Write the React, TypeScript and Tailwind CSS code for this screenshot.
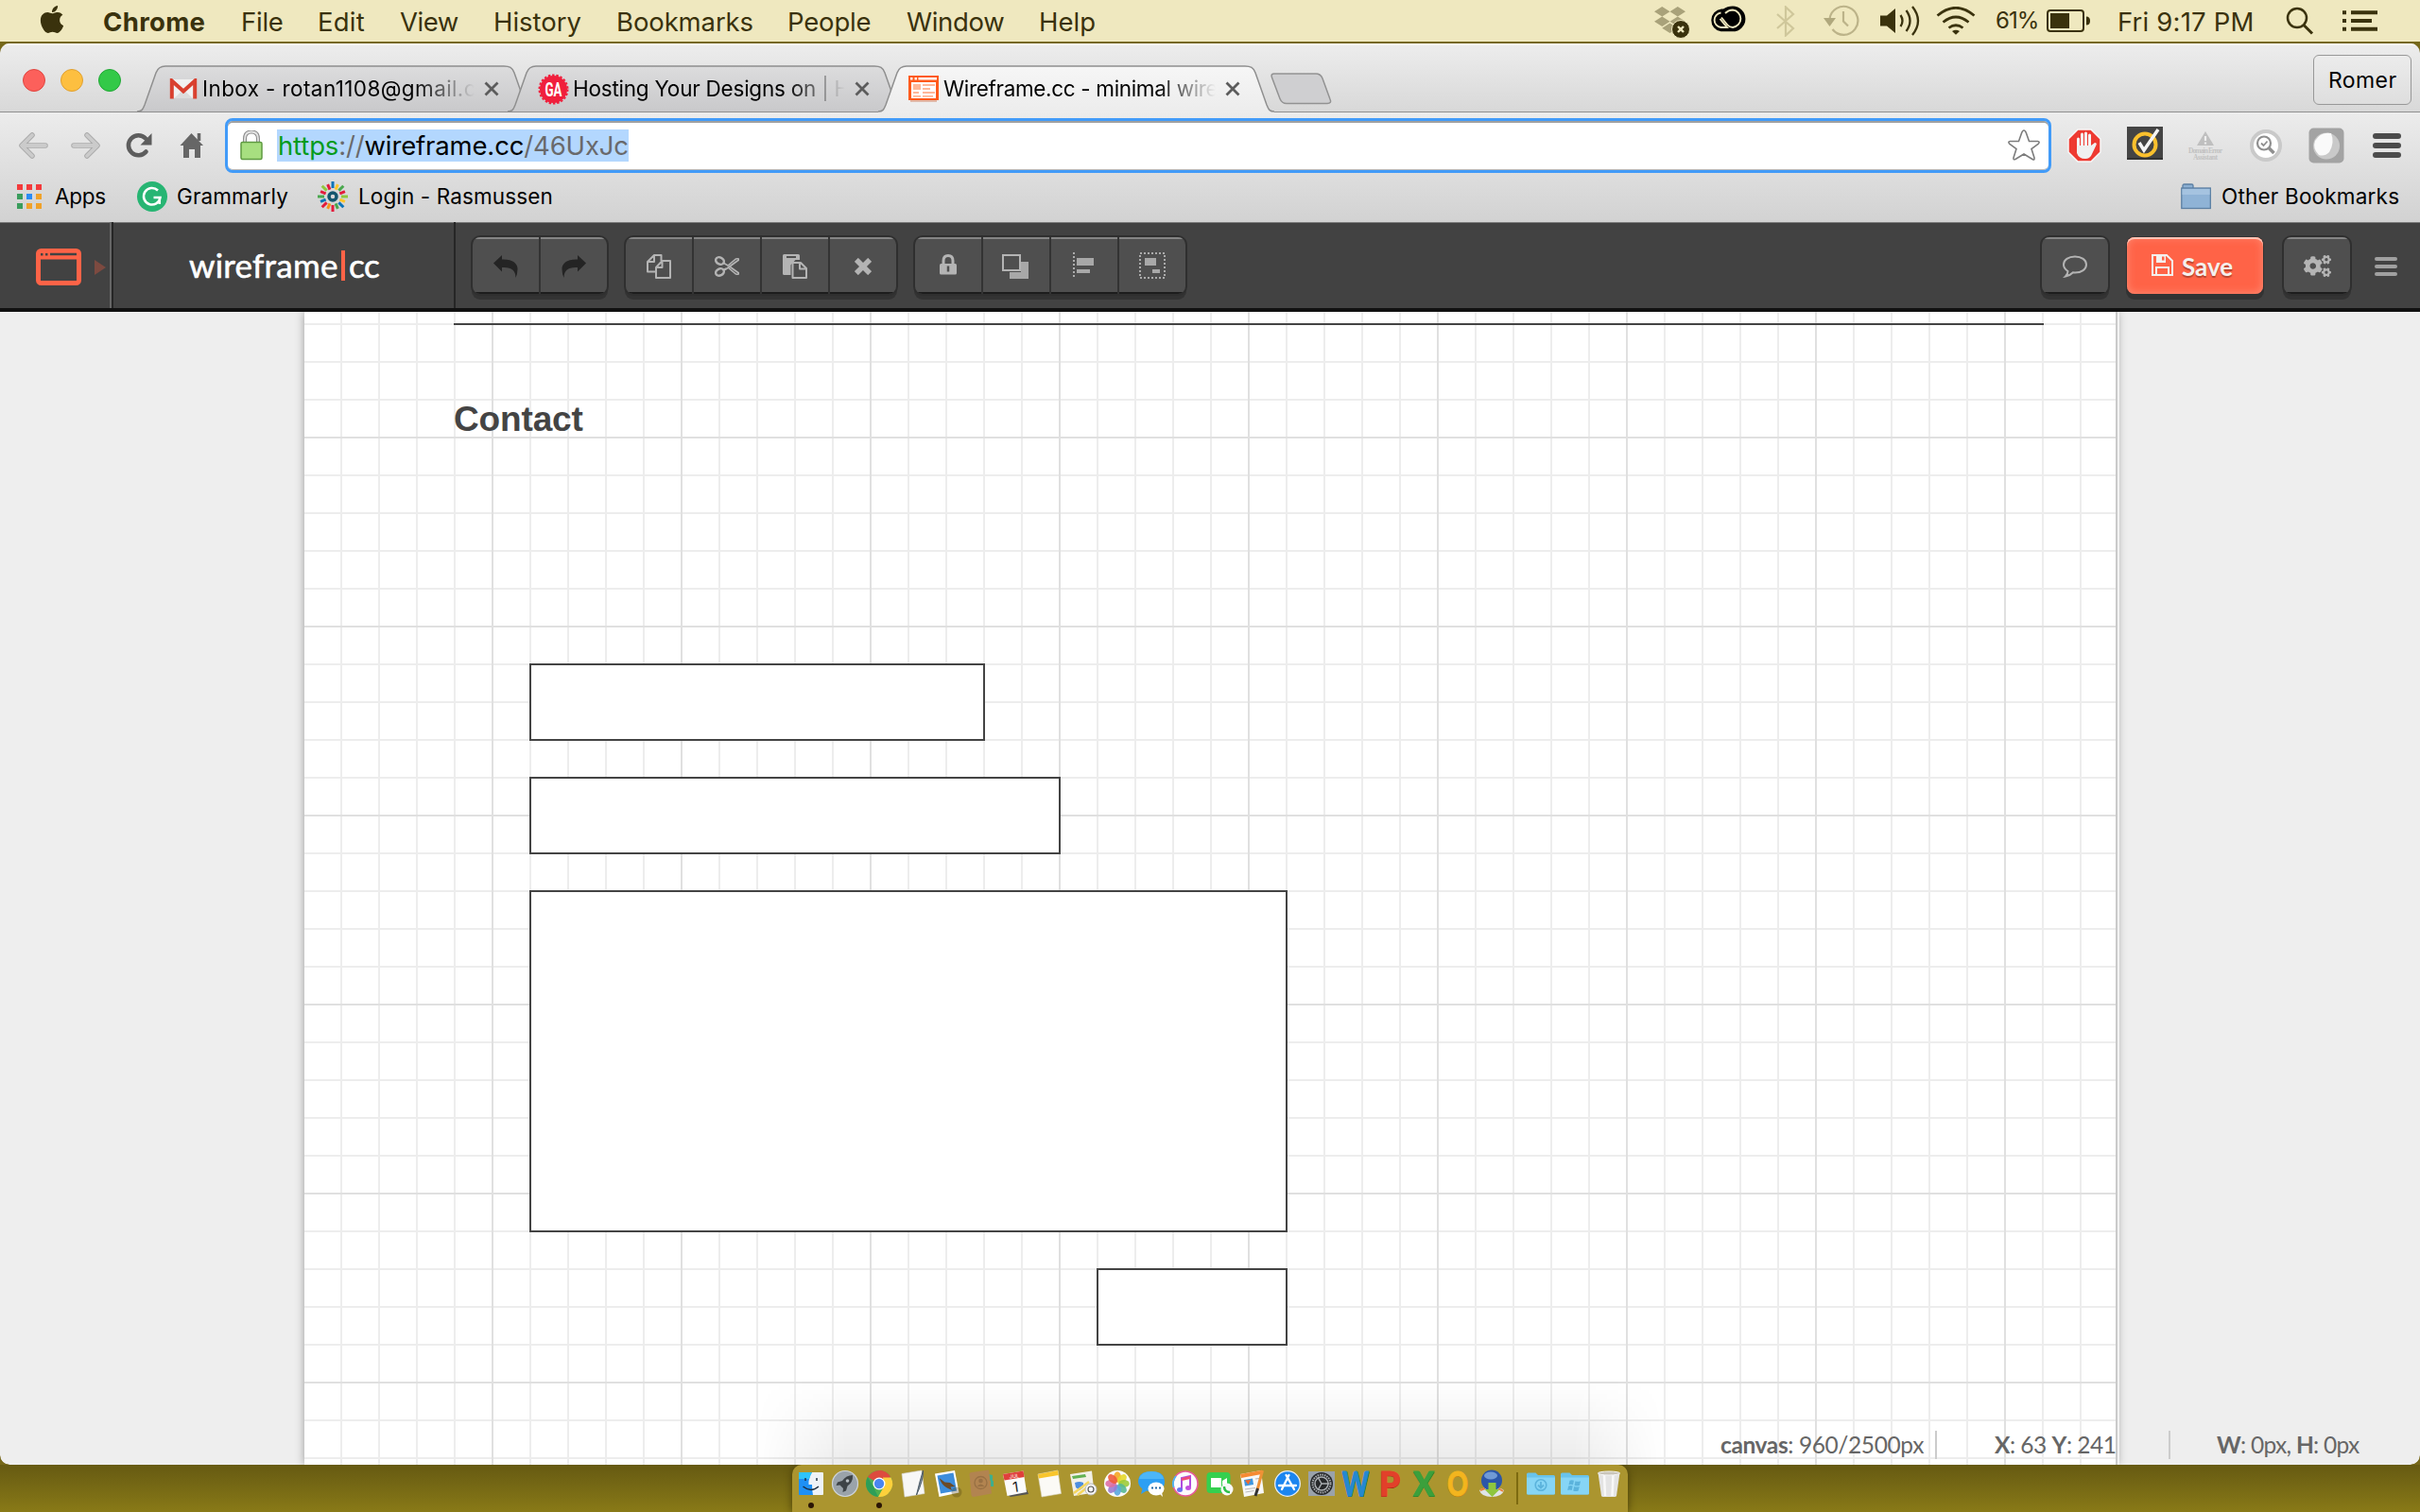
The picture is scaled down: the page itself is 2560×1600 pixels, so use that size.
import { useLayoutEffect, useRef, useState } from "react";
import type { ReactNode } from "react";
import { FaApple, FaDropbox, FaCogs } from "react-icons/fa";

const UI = "font-[Inter,'Liberation_Sans',sans-serif]";
const LATO = "font-[Lato,'Open_Sans',sans-serif]";

/** Sets a run of text to an exact width by spreading the difference over its letters. */
function Fit({ w, className = "", children }: { w: number; className?: string; children: ReactNode }) {
  const ref = useRef<HTMLSpanElement>(null);
  const [ls, setLs] = useState(0);
  useLayoutEffect(() => {
    const el = ref.current;
    if (!el) return;
    const n = (el.textContent || "").length || 1;
    setLs((w - el.offsetWidth) / n);
  }, [w]);
  return (
    <span className={"block shrink-0 whitespace-pre " + className} style={{ width: w }}>
      <span ref={ref} className="inline-block" style={{ letterSpacing: ls }}>
        {children}
      </span>
    </span>
  );
}

function Ico({ w, h, className = "", children }: { w: number; h: number; className?: string; children: ReactNode }) {
  return (
    <svg width={w} height={h} viewBox={`0 0 ${w} ${h}`} fill="none" className={"shrink-0 " + className}>
      {children}
    </svg>
  );
}

/* ---------- macOS menu bar ---------- */

function MenuBar() {
  return (
    <div className={"flex h-[46px] w-full shrink-0 items-center border-b-2 border-[#76681a] bg-[#efe8bf] text-[27.5px] leading-[44px] text-[#3a320d] " + UI}>
      <FaApple className="-mt-1 ml-[39px] h-[33px] w-[32px] shrink-0" />
      <div className="flex pt-px">
        <Fit w={108} className="ml-[38px] font-bold">Chrome</Fit>
        <Fit w={45} className="ml-[38px]">File</Fit>
        <Fit w={50} className="ml-[36px]">Edit</Fit>
        <Fit w={62} className="ml-[37px]">View</Fit>
        <Fit w={93} className="ml-[37px]">History</Fit>
        <Fit w={145} className="ml-[37px]">Bookmarks</Fit>
        <Fit w={88} className="ml-[36px]">People</Fit>
        <Fit w={103} className="ml-[38px]">Window</Fit>
        <Fit w={60} className="ml-[37px]">Help</Fit>
      </div>
      <div className="ml-auto flex items-center">
        <div className="relative h-[34px] w-[38px]">
          <FaDropbox className="h-[32px] w-[35px] text-[#a9a27a]" />
          <Ico w={20} h={20} className="absolute -right-px bottom-[-2px]">
            <circle cx="10" cy="10" r="9.5" fill="#3a320d" stroke="#efe8bf" strokeWidth="1" />
            <path d="M7 7l6 6M13 7l-6 6" stroke="#efe8bf" strokeWidth="2.4" />
          </Ico>
        </div>
        <Ico w={39} h={28} className="ml-[21px] -mt-1">
          <path d="M13 3.5h2C18 1.500 21 .5 25 .5a13.400 13.400 0 0 1 0 26.800H12.500a12 12 0 0 1 .5-23.800z" fill="#000" />
          <path d="M12.500 7.500a7.800 7.800 0 0 0 0 15.500H19L11.500 14M17 8q3.500-3.500 8-3.500a9.300 9.300 0 0 1 0 18.500q-3.500 0-5.500-2.500L13 12.500" stroke="#efe8bf" strokeWidth="1.900" />
        </Ico>
        <Ico w={20} h={33} className="ml-[32px]">
          <path d="M1 9l17 15-8 7.500V1.500L18 9 1 24" stroke="#cfc79b" strokeWidth="2.200" />
        </Ico>
        <Ico w={38} h={34} className="ml-[30px]">
          <path d="M6.500 15A15 15 0 1 1 9.500 26M21 7v10.500l5 5" stroke="#bcb389" strokeWidth="2.200" />
          <path d="M0 14h13l-6.500 9z" fill="#b0a87d" />
        </Ico>
        <Ico w={42} h={32} className="ml-[22px]">
          <path d="M0 10.500h7L16 3v26l-9-7.500H0z" fill="#3a320d" />
          <path d="M21.500 10q4 6 0 12M27.500 5q8 11 0 22M34 1q12 15 0 30" stroke="#3a320d" strokeWidth="2.300" />
        </Ico>
        <Ico w={42} h={30} className="ml-[17px]">
          <path d="M1.500 9.500Q21-7 40.500 9.500M7.500 16.500q13.500-11 27 0M13.500 22.500q7.500-5.500 15 0" stroke="#3a320d" strokeWidth="2.700" />
          <path d="M17 26q4-2.500 8 0l-4 3.800z" fill="#3a320d" />
        </Ico>
        <Fit w={45} className="ml-[21px] text-[24px]">61%</Fit>
        <Ico w={47} h={24} className="ml-[9px]">
          <rect x="1" y="1" width="38" height="22" rx="3" stroke="#3a320d" strokeWidth="2" />
          <rect x="4" y="4" width="20" height="16" fill="#3a320d" />
          <path d="M42 7.500q4 0 4 4.500t-4 4.500z" fill="#3a320d" />
        </Ico>
        <Fit w={144} className="ml-[28px] pt-px">Fri 9:17 PM</Fit>
        <Ico w={30} h={30} className="ml-[34px]">
          <circle cx="12" cy="12" r="10" stroke="#3a320d" strokeWidth="2.500" />
          <path d="M19 19.500l9 9" stroke="#3a320d" strokeWidth="3" />
        </Ico>
        <Ico w={37} h={22} className="ml-[30px] mr-[45px]">
          <path d="M0 2.200h4M0 11h4M0 19.800h4M9 2.200h28M9 11h22M9 19.800h28" stroke="#3a320d" strokeWidth="4" />
        </Ico>
      </div>
    </div>
  );
}

/* ---------- Chrome tab strip ---------- */

const TAB_PATH = "M0 49C5 49 6 47 8 42L20 8C22 2.500 25 1 30 1H388C394 1 397 2.500 399 8L411 42C413 47 414 49 419 49";

function Tab({ active, icon, title, textW, className = "" }: { active?: boolean; icon: ReactNode; title: string; textW: number; className?: string }) {
  return (
    <div className={"relative h-[50px] w-[420px] shrink-0 " + (active ? "z-10 " : "") + className}>
      <svg width="420" height="51" viewBox="0 0 420 51" className="absolute left-0 top-0" fill="none">
        <defs>
          <linearGradient id="tabOn" x1="0" y1="0" x2="0" y2="1">
            <stop offset="0" stopColor="#f6f6f6" />
            <stop offset="1" stopColor="#ececec" />
          </linearGradient>
          <linearGradient id="tabOff" x1="0" y1="0" x2="0" y2="1">
            <stop offset="0" stopColor="#dcdcdd" />
            <stop offset="1" stopColor="#c9c9cb" />
          </linearGradient>
        </defs>
        <path d={TAB_PATH + (active ? "V51H0z" : "z")} fill={active ? "url(#tabOn)" : "url(#tabOff)"} />
        <path d={TAB_PATH} stroke="#8f8f8f" strokeWidth="1.500" />
      </svg>
      <div className={"relative flex h-full items-center text-[22.5px] leading-[50px] text-black " + UI}>
        <div className="ml-[32px] flex w-[37px] shrink-0 items-center">{icon}</div>
        <div className="w-[288px] shrink-0 overflow-hidden [mask-image:linear-gradient(90deg,#000_78%,transparent_100%)]">
          <Fit w={textW}>{title}</Fit>
        </div>
        <Ico w={16} h={16} className="ml-[10px]">
          <path d="M1.500 1.500l13 13M14.500 1.500l-13 13" stroke="#5c5c5c" strokeWidth="2.800" />
        </Ico>
      </div>
    </div>
  );
}

function GmailIcon() {
  return (
    <Ico w={30} h={22} className="ml-[2px]">
      <path d="M1 1h28v20H1z" fill="#f1f1f1" />
      <path d="M5 21l10-9 10 9z" fill="#dcdcdc" />
      <path d="M2.800 21.500V2.500L15 13.500 27.200 2.500v19" stroke="#d9402f" strokeWidth="4" />
    </Ico>
  );
}

function GAIcon() {
  return (
    <Ico w={33} h={33}>
      <circle cx="16.500" cy="16.500" r="14.500" fill="#f01f3c" />
      <circle cx="16.500" cy="16.500" r="15" stroke="#f01f3c" strokeWidth="2" strokeDasharray="2.500 1.800" />
      <text x="16.500" y="24" textAnchor="middle" fontFamily="Roboto, sans-serif" fontWeight="700" fontSize="21" textLength="18" lengthAdjust="spacingAndGlyphs" fill="#fff">GA</text>
    </Ico>
  );
}

function WireIcon() {
  return (
    <Ico w={32} h={28}>
      <rect width="32" height="26" fill="#ff5a1c" />
      <path d="M2 2h2.500v2.500H2zM6.500 2H9v2.500H6.500zM10.500 2H30v2.500H10.500zM3 7h26v17H3z" fill="#fff" />
      <path d="M5 9h8v6H5zM15 9h13v2H15zM15 13h8v2h-8zM5 17h6v2H5zM15 17h13v2H15zM5 21h8v1.800H5zM15 21h11v1.800H15z" fill="#ffb798" />
      <path d="M2 27h28" stroke="#e2b9a8" strokeWidth="2" />
    </Ico>
  );
}

function TabStrip() {
  return (
    <div className="flex h-[73px] w-full shrink-0 items-end bg-linear-to-b from-[#ededed] to-[#d8d8d8] shadow-[inset_0_2px_0_#f8f8f8,inset_0_-1px_0_#8f8f8f]">
      <div className="mb-[22px] ml-[24px] flex shrink-0 gap-4">
        <div className="size-6 rounded-full border border-[#e0453f] bg-[#fc605b]" />
        <div className="size-6 rounded-full border border-[#e0a030] bg-[#fdbf40]" />
        <div className="size-6 rounded-full border border-[#1fa834] bg-[#33c948]" />
      </div>
      <Tab className="ml-[17px]" icon={<GmailIcon />} title="Inbox - rotan1108@gmail.c" textW={290} />
      <Tab className="-ml-[28px]" icon={<GAIcon />} title="Hosting Your Designs on | H" textW={293} />
      <Tab className="-ml-[28px]" active icon={<WireIcon />} title="Wireframe.cc - minimal wire" textW={290} />
      <Ico w={66} h={34} className="-ml-[5px] mb-[8px]">
        <path d="M4 1H48q5 0 7 5l8 22q2 4.500-3 4.500H17q-5 0-7-5L1.500 5Q0 1 4 1z" fill="#cfcfd1" stroke="#929292" strokeWidth="1.500" />
      </Ico>
      <div className={"mb-[8px] ml-auto mr-[9px] flex h-[53px] w-[104px] shrink-0 items-center justify-center rounded-md border-[1.500px] border-[#989898] bg-linear-to-b from-[#ececec] to-[#dedede] pt-[2px] text-[23px] text-black " + UI}>
        <Fit w={72}>Romer</Fit>
      </div>
    </div>
  );
}

/* ---------- Chrome toolbar and bookmarks ---------- */

function Extensions() {
  return (
    <>
      <Ico w={36} h={36} className="ml-[17px]">
        <path d="M11 1h14l10 10v14L25 35H11L1 25V11z" fill="#ee3a31" stroke="#f7f7f7" strokeWidth="1.500" />
        <path d="M11.500 11v12M15.500 6v14M19.500 5v14M23.500 7v14" stroke="#f5f5f5" strokeWidth="3" strokeLinecap="round" />
        <path d="M10 18h15l4-3q2.500 0 1.500 2.500l-5 10.500q-2 4-6.500 4-7 0-9-6z" fill="#f0f0f0" />
      </Ico>
      <Ico w={38} h={38} className="ml-[27px] -mt-[3px]">
        <path d="M0 1h38v34H0z" fill="#444" />
        <path d="M0 35h38" stroke="#333" strokeWidth="2" />
        <circle cx="19" cy="20" r="11.500" stroke="#fbc02d" strokeWidth="4" />
        <path d="M13 18l5 8L33 4" stroke="#f4f4f4" strokeWidth="3.500" />
      </Ico>
      <Ico w={38} h={32} className="ml-[26px]">
        <path d="M19 1l9 15H10z" fill="#bfbfbf" />
        <path d="M19 6v5M19 12.500v2" stroke="#eee" strokeWidth="2.200" />
        <text x="19" y="24" textAnchor="middle" fontFamily="Liberation Serif, serif" fontWeight="700" fontSize="7.500" textLength="36" fill="#c2c2c2">Domain Error</text>
        <text x="19" y="31" textAnchor="middle" fontFamily="Liberation Serif, serif" fontWeight="700" fontSize="7.500" textLength="26" fill="#c2c2c2">Assistant</text>
      </Ico>
      <Ico w={34} h={34} className="ml-[28px]">
        <circle cx="17" cy="17" r="15" fill="#fff" stroke="#c9c9c9" strokeWidth="4" />
        <circle cx="15" cy="14.500" r="7" stroke="#8f8f8f" strokeWidth="2.200" />
        <path d="M20 19.500l5.500 5.500" stroke="#8f8f8f" strokeWidth="3.500" />
        <path d="M12 14.500l2.500 2.500 4-4.500" stroke="#8f8f8f" strokeWidth="1.800" />
      </Ico>
      <Ico w={38} h={38} className="ml-[28px]">
        <rect x="0.500" y="0.500" width="37" height="37" rx="5" fill="#a3a3a3" />
        <circle cx="19" cy="19.500" r="14" fill="#c9c9c9" />
        <path d="M24 6q4 10-2 20-5 5-11 3Q4 22 7 14 13 4 24 6z" fill="#fafafa" />
      </Ico>
      <Ico w={30} h={26} className="ml-[30px]">
        <path d="M3 3h24M3 13h24M3 23h24" stroke="#4b4b4b" strokeWidth="6" strokeLinecap="round" />
      </Ico>
    </>
  );
}

function Toolbar() {
  return (
    <div className="flex h-[69px] w-full shrink-0 items-center">
      <Ico w={31} h={28} className="ml-[20px]">
        <path d="M14 3L3 14l11 11M4 14h24" stroke="#a9a9a9" strokeWidth="5.500" strokeLinecap="round" strokeLinejoin="round" />
        <path d="M14 3L3 14l11 11M4 14h24" stroke="#cbcbcb" strokeWidth="3.800" strokeLinecap="round" strokeLinejoin="round" />
      </Ico>
      <Ico w={31} h={28} className="ml-[24px]">
        <path d="M17 3l11 11-11 11M27 14H3" stroke="#a9a9a9" strokeWidth="5.500" strokeLinecap="round" strokeLinejoin="round" />
        <path d="M17 3l11 11-11 11M27 14H3" stroke="#cbcbcb" strokeWidth="3.800" strokeLinecap="round" strokeLinejoin="round" />
      </Ico>
      <Ico w={28} h={28} className="ml-[27px]">
        <path d="M21.500 20.500A10.500 10.500 0 1 1 21 6.500" stroke="#5d5d5d" strokeWidth="4.600" strokeLinecap="round" />
        <path d="M27.500 1v12.500H15.500z" fill="#5d5d5d" />
      </Ico>
      <Ico w={26} h={28} className="ml-[29px]">
        <path d="M12.500 1L25 14h-3v13h-6V18h-6v9H4V14H0.500z" fill="#666" />
        <path d="M20.500 1v8" stroke="#666" strokeWidth="3.500" />
      </Ico>
      <div className="ml-[22px] flex h-[58px] w-[1932px] shrink-0 items-center rounded-[8px] border-[3px] border-[#429bf8] bg-white shadow-[inset_0_2px_0_#a0a0a0,inset_0_-1px_0_#b8b8b8]">
        <Ico w={24} h={32} className="ml-[13px]">
          <path d="M5 15V9q0-7.500 7-7.500T19 9v6" stroke="#8d8d8d" strokeWidth="4" />
          <path d="M5 15V9q0-7.500 7-7.500T19 9v6" stroke="#e3e3e3" strokeWidth="1.800" />
          <rect x="1" y="12.500" width="22" height="18" rx="1.500" fill="#a7df80" stroke="#5e9a41" strokeWidth="1.500" />
        </Ico>
        <div className={"ml-[15px] h-[34px] w-[372px] shrink-0 bg-[#b3d7fe] pl-px text-[27.5px] leading-[35px] text-[#69696b] " + UI}>
          <Fit w={371}>
            <span className="text-[#079b1c]">https</span>://<span className="text-black">wireframe.cc</span>/46UxJc
          </Fit>
        </div>
        <Ico w={36} h={36} className="ml-auto mr-[8px]">
          <path d="M18 2Q19.500 2 20.500 5l3 8.500h9q3 .5.500 3L26 21.500l3 9.500q.5 3-2 1.500L18 27l-9 5.500q-2.500 1-2-1.500l3-9.500-7-5q-2.500-2.500.5-3h9l3-8.500Q16.500 2 18 2z" stroke="#7d7d7d" strokeWidth="1.600" />
        </Ico>
      </div>
      <Extensions />
    </div>
  );
}

const APP_DOTS = ["#f33b3c", "#f33b3c", "#f33b3c", "#3a9d5d", "#2a8cf4", "#f0a22a", "#3a9d5d", "#f0a22a", "#f0a22a"];
const RAYS = ["#0c74b8", "#ffc629", "#4aa84e", "#e31b3b", "#8fc73e", "#ffc629", "#0c74b8", "#4aa84e", "#e31b3b", "#f7941d", "#e31b3b", "#0c74b8", "#4aa84e", "#e31b3b", "#8fc73e", "#e31b3b"];

function BookmarksBar() {
  return (
    <div className={"flex h-[47px] w-full shrink-0 items-center pb-[7px] text-[22.500px] leading-[40px] text-black " + UI}>
      <div className="ml-[18px] grid shrink-0 grid-cols-3 gap-[4px]">
        {APP_DOTS.map((c, i) => (
          <div key={i} className="size-[6px]" style={{ backgroundColor: c }} />
        ))}
      </div>
      <Fit w={54} className="ml-[14px]">Apps</Fit>
      <Ico w={32} h={32} className="ml-[33px]">
        <circle cx="16" cy="16" r="16" fill="#27b573" />
        <path d="M22 9.500A8.800 8.800 0 1 0 24.500 17H17.500M23.800 17v7" stroke="#fff" strokeWidth="2.500" />
      </Ico>
      <Fit w={118} className="ml-[10px]">Grammarly</Fit>
      <Ico w={32} h={32} className="ml-[31px]">
        {RAYS.map((c, i) => (
          <path key={i} d={i % 2 ? "M16 2v6" : "M16 0v7"} stroke={c} strokeWidth="3" transform={`rotate(${i * 22.5} 16 16)`} />
        ))}
        <circle cx="16" cy="16" r="4" stroke="#14566e" strokeWidth="3.500" />
      </Ico>
      <Fit w={206} className="ml-[11px]">Login - Rasmussen</Fit>
      <Ico w={32} h={28} className="ml-auto">
        <path d="M2 5V2.500Q2 1 3.500 1h8Q13 1 13 2.500V5" fill="#8db0d3" stroke="#5b7fa3" strokeWidth="1.300" />
        <rect x="0.800" y="5" width="30.500" height="21.500" fill="#8fb3d6" stroke="#5b7fa3" strokeWidth="1.300" />
        <path d="M1.500 6h29v6h-29z" fill="#a5c3e0" />
      </Ico>
      <Fit w={188} className="ml-[11px] mr-[22px]">Other Bookmarks</Fit>
    </div>
  );
}

/* ---------- wireframe.cc application bar ---------- */

const BTN = "flex h-[60px] shrink-0 overflow-hidden rounded-[8px] bg-[#4f4f4f] shadow-[0_0_0_2px_#2f2f2f,0_5px_0_1px_#333]";
const BTN_IN = "flex h-full flex-1 items-center justify-center pt-[2px] shadow-[inset_0_2px_0_#858585,inset_0_-2px_0_#1d1d1d]";

function Group({ className = "", icons }: { className?: string; icons: ReactNode[] }) {
  return (
    <div className={BTN + " " + className}>
      {icons.map((ic, i) => (
        <div key={i} className={BTN_IN + (i > 0 ? " border-l-2 border-[#333]" : "")}>
          {ic}
        </div>
      ))}
    </div>
  );
}

const G = "#b4b4b4";

const undo = (
  <Ico w={26} h={24}>
    <path d="M0 8.500L9 0v4.500C20 4 26 9 25.500 15q0 5-2 9 0-12-14.500-11v4.500z" fill="#242424" />
  </Ico>
);
const redo = (
  <Ico w={26} h={24}>
    <path d="M26 8.500L17 0v4.500C6 4 0 9 .5 15q0 5 2 9 0-12 14.500-11v4.500z" fill="#242424" />
  </Ico>
);
const copy = (
  <Ico w={26} h={26}>
    <path d="M10 18.500H1V8L8 1h7.500v6M8 1v7H1M10 25V14l6.500-7H25v18zM16.500 7v7H10" stroke={G} strokeWidth="2" strokeLinejoin="round" />
  </Ico>
);
const cut = (
  <Ico w={26} h={22}>
    <ellipse cx="5.500" cy="5" rx="4.500" ry="3.500" transform="rotate(25 5.500 5)" stroke={G} strokeWidth="2.400" />
    <ellipse cx="5.500" cy="17" rx="4.500" ry="3.500" transform="rotate(-25 5.500 17)" stroke={G} strokeWidth="2.400" />
    <path d="M9 7l5 3L22.500 3q3-.8 3 1L11 14.500M9 15l3-2M14 12l8.500 7q3 .8 3-1L15 10.500" stroke={G} strokeWidth="1.600" />
  </Ico>
);
const paste = (
  <Ico w={26} h={26}>
    <path d="M1.500 0h15Q18 0 18 1.500V6h-4.500L8.500 11.500V22h-7Q0 22 0 20.500v-19Q0 0 1.500 0z" fill={G} />
    <path d="M4 3h10" stroke="#4f4f4f" strokeWidth="2" />
    <path d="M10.500 25V9h8.500l6 6v10zM18 9v6.500h7" fill="#4f4f4f" stroke={G} strokeWidth="2" strokeLinejoin="round" />
  </Ico>
);
const cross = (
  <Ico w={18} h={18}>
    <path d="M3.800 3.800l10.400 10.400M14.200 3.800L3.800 14.200" stroke={G} strokeWidth="5.600" strokeLinecap="square" />
  </Ico>
);
const lock = (
  <Ico w={18} h={22} className="-mt-1">
    <path d="M4 11V7q0-5.500 5-5.500T14 7v4" stroke={G} strokeWidth="3" />
    <rect x="0" y="10" width="18" height="11.500" rx="1.500" fill={G} />
    <path d="M9 12.500v6" stroke="#4f4f4f" strokeWidth="2.500" />
  </Ico>
);
const layers = (
  <Ico w={28} h={26} className="-ml-[2px]">
    <path d="M20 8h8v18H8v-7h12z" fill="#a8a8a8" />
    <rect x="1" y="1" width="18" height="16" fill="#4f4f4f" stroke={G} strokeWidth="2" />
  </Ico>
);
const align = (
  <Ico w={22} h={28} className="-ml-[2px] -mt-[2px]">
    <path d="M1 0v28" stroke="#ababab" strokeWidth="2" strokeDasharray="2 2" />
    <path d="M4 6h18v8H4zM4 18h14v4H4z" fill="#a8a8a8" />
  </Ico>
);
const group = (
  <Ico w={28} h={28} className="-mt-[2px]">
    <rect x="1" y="1" width="26" height="26" stroke="#ababab" strokeWidth="2" strokeDasharray="2 2" />
    <path d="M6 6h12v8H6zM14 18h8v4h-8z" fill="#a8a8a8" />
  </Ico>
);

function AppBar() {
  return (
    <div className="flex h-[95px] w-full shrink-0 items-center border-b-4 border-[#111] bg-[#424242] shadow-[inset_0_1px_0_#777]">
      <Ico w={48} h={39} className="ml-[38px] mt-[3px]">
        <rect x="2.500" y="2.500" width="43" height="34" rx="3" stroke="#ff6347" strokeWidth="5" />
        <path d="M2 2h44v9.500H2z" fill="#ff6347" />
        <path d="M15 6h28M5 6.200h2.500M10 6.200h2.500" stroke="#424242" strokeWidth="2.400" />
      </Ico>
      <Ico w={12} h={16} className="ml-[14px] mt-[4px]">
        <path d="M0 0l12 8-12 8z" fill="#7d4a40" />
      </Ico>
      <div className="ml-[4px] h-full w-[4px] shrink-0 border-l-2 border-r-2 border-l-[#666] border-r-[#262626]" />
      <div className={"flex h-full w-[362px] shrink-0 items-center border-r-2 border-[#262626] text-[35px] leading-[44px] text-white [-webkit-text-stroke:0.6px_white] " + LATO}>
        <Fit w={158} className="ml-[80px] -mt-[2px]">wireframe</Fit>
        <div className="ml-[3px] h-[32px] w-[4px] shrink-0 bg-[#ff6347]" />
        <Fit w={32} className="ml-[4px] -mt-[2px]">cc</Fit>
      </div>
      <Group className="ml-[18px] w-[142px]" icons={[undo, redo]} />
      <Group className="ml-[20px] w-[286px]" icons={[copy, cut, paste, cross]} />
      <Group className="ml-[20px] w-[286px]" icons={[lock, layers, align, group]} />
      <Group
        className="ml-auto w-[70px]"
        icons={[
          <Ico w={26} h={24}>
            <path d="M13 1.500C20 1.500 25 5 25 10s-5 8.500-12 8.500l-2-.2Q8 21.500 3 22.500 5.500 20 5.500 17 1 14 1 10C1 5 6 1.500 13 1.500z" stroke={G} strokeWidth="2" />
          </Ico>,
        ]}
      />
      <div className={"ml-[20px] flex h-[60px] w-[144px] shrink-0 items-center rounded-[8px] bg-[#ff6347] pl-[26px] text-[26px] font-bold text-[#f4f0ee] [text-shadow:0_2px_1px_#b8452f] shadow-[inset_0_2px_0_#ffc4b6,inset_0_0_10px_#ff8f78,0_0_0_1px_#333,0_5px_0_1px_#333] " + LATO}>
        <Ico w={23} h={23}>
          <path d="M1 1h15l6 6v15H1z" stroke="#f4f0ee" strokeWidth="2" />
          <path d="M5 1h10v8H5z" fill="#f4f0ee" />
          <path d="M11 2.500h2.500v4H11z" fill="#ff6347" />
          <path d="M5 22v-8h13v8" stroke="#f4f0ee" strokeWidth="2" />
        </Ico>
        <Fit w={54} className="ml-[9px] pt-[4px]">Save</Fit>
      </div>
      <Group className="ml-[22px] w-[70px]" icons={[<FaCogs className="size-[29px] text-[#b4b4b4]" />]} />
      <div className="ml-[26px] mr-[24px] mt-[2px] flex w-[24px] shrink-0 flex-col gap-[4px]">
        <div className="h-[4px] rounded-sm bg-[#a0a0a0]" />
        <div className="h-[4px] rounded-sm bg-[#a0a0a0]" />
        <div className="h-[4px] rounded-sm bg-[#a0a0a0]" />
      </div>
    </div>
  );
}

/* ---------- Drawing canvas ---------- */

function Canvas() {
  return (
    <div className="relative flex h-[1220px] w-full shrink-0 overflow-hidden rounded-b-[10px] bg-[#eeeeee]">
      <div className="relative ml-[322px] h-full w-[1918px] shrink-0 border-r-2 border-[#cacaca] bg-white bg-[linear-gradient(#e0e0e0_2px,transparent_2px),linear-gradient(90deg,#e0e0e0_2px,transparent_2px),linear-gradient(#ededed_2px,transparent_2px),linear-gradient(90deg,#ededed_2px,transparent_2px)] bg-[length:200px_200px,200px_200px,40px_40px,40px_40px] bg-[position:0_132px,198px_0,0_12px,38px_0] shadow-[2px_0_0_#f2f2f2,0_0_9px_#999]">
        <div className="absolute left-[158px] top-[12px] h-[2px] w-[1682px] bg-[#444]" />
        <div className="absolute left-[158px] top-[93px] font-['Liberation_Sans',Arial,sans-serif] text-[37px] font-bold leading-[42px] text-[#444]">
          <Fit w={137}>Contact</Fit>
        </div>
        <div className="absolute left-[238px] top-[372px] h-[82px] w-[482px] border-2 border-[#444] bg-white" />
        <div className="absolute left-[238px] top-[492px] h-[82px] w-[562px] border-2 border-[#444] bg-white" />
        <div className="absolute left-[238px] top-[612px] h-[362px] w-[802px] border-2 border-[#444] bg-white" />
        <div className="absolute left-[838px] top-[1012px] h-[82px] w-[202px] border-2 border-[#444] bg-white" />
      </div>
      <div className="absolute bottom-0 left-[800px] h-[90px] w-[960px] bg-linear-to-t from-black/8 to-transparent [mask-image:linear-gradient(90deg,transparent,#000_10%,#000_90%,transparent)]" />
      <div className={"absolute bottom-0 right-[64px] flex h-[42px] items-center text-[24.500px] leading-[28px] text-[#666] " + LATO}>
        <Fit w={215}><b>canvas</b>: 960/2500px</Fit>
        <div className="ml-[12px] h-[30px] w-[2px] bg-[#ccc]" />
        <Fit w={128} className="ml-[61px]"><b>X</b>: 63 <b>Y</b>: 241</Fit>
        <div className="ml-[56px] h-[30px] w-[2px] bg-[#ccc]" />
        <Fit w={151} className="ml-[49px]"><b>W</b>: 0px, <b>H</b>: 0px</Fit>
      </div>
    </div>
  );
}

/* ---------- Dock ---------- */

function Letter({ c, color, dark }: { c: string; color: string; dark: string }) {
  return (
    <>
      <text x="18" y="32" textAnchor="middle" fontFamily="Lato, sans-serif" fontWeight="900" fontSize="36" textLength={c === "W" ? 29 : 23} lengthAdjust="spacingAndGlyphs" fill={dark}>{c}</text>
      <text x="18" y="31" textAnchor="middle" fontFamily="Lato, sans-serif" fontWeight="900" fontSize="36" textLength={c === "W" ? 28 : 22} lengthAdjust="spacingAndGlyphs" fill={color} stroke={color} strokeWidth="1">{c}</text>
    </>
  );
}

const PETALS = ["#f5a623", "#e6d82c", "#9ccb3b", "#57b894", "#5aa7df", "#9b7bd0", "#dd6fa3", "#ee5b3c"];

const DOCK: ReactNode[] = [
  <>
    <rect x="5" y="6" width="26" height="24" rx="1" fill="#eef2f8" />
    <path d="M5 6h14q-4 6-3.500 13H19q0 6 1 11H5z" fill="#1e90f5" />
    <path d="M5 6h14q-2 3-2.800 7H5z" fill="#2ec4fb" />
    <path d="M12 12v3M24 12v3M9.500 21q8.500 7 16.500 0" stroke="#1c2b3c" strokeWidth="1.400" />
  </>,
  <>
    <circle cx="18" cy="18" r="13.500" fill="#9aa3aa" stroke="#cfd5da" strokeWidth="1.200" />
    <path d="M26 9q-7 0-11 6l-5 1.500-1.500 3.500 4-.5 3.500 3.500-.5 4 3.500-1.500 1.500-5q6-4 5.500-11.500z" fill="#3d4347" />
    <circle cx="20.500" cy="15" r="1.800" fill="#b6bdc2" />
  </>,
  <>
    <circle cx="18" cy="18" r="14" fill="#4caf50" />
    <path d="M18 18L5.900 11A14 14 0 0 1 30.100 11z" fill="#dd4b3e" />
    <path d="M18 4a14 14 0 0 1 12.100 7H18z" fill="#dd4b3e" />
    <path d="M30.500 11.500A14 14 0 0 1 17 32l6-11-1-9.500z" fill="#fdd03b" />
    <path d="M5.900 11l6 10.500L17 32A14 14 0 0 1 5.900 11z" fill="#2d9e58" />
    <circle cx="18" cy="18" r="6.500" fill="#fff" />
    <circle cx="18" cy="18" r="5.200" fill="#4a86f0" />
  </>,
  <>
    <path d="M6 7.500l21-3.500 3 24.500L9 32z" fill="#f7f7f7" stroke="#d5d5d5" strokeWidth=".6" />
    <path d="M28.500 4Q29 14 21.500 30L25 16z" fill="#7f92a3" stroke="#4e5b66" />
  </>,
  <>
    <path d="M5 7.500l21-3.500 4.500 23.500L9.500 32z" fill="#fff" />
    <path d="M7.500 9.500l17-3 3.500 19-17 3z" fill="#3d8ddc" />
    <path d="M9.500 12l6 4.500 5.500.5 5.500 4-5 .5 1.500 3.500-6-3q-5-3-7.500-10z" fill="#6b4a28" />
    <circle cx="28" cy="27" r="5.500" fill="#4a3d10" opacity=".3" />
  </>,
  <>
    <path d="M26 8l4 1v6h-3zM28 15h3v6h-3z" fill="#3fae8c" />
    <path d="M5.500 8q0-1.500 2-2L26 3.500l3 25L10 32q-2 0-2.500-2z" fill="#b28450" />
    <circle cx="17.500" cy="17" r="6.500" stroke="#987043" strokeWidth="1.300" />
    <circle cx="17.500" cy="15" r="2.300" fill="#987043" />
    <path d="M13.500 21q4-5 8 0z" fill="#987043" />
  </>,
  <>
    <path d="M30 24l2 5-19 3-3-2z" fill="#555" />
    <path d="M5 8l21.500-3.500L30 27 9.500 31z" fill="#fbfbfb" />
    <path d="M5 8l21.500-3.500 1 6.500L6.500 14.500z" fill="#e0403b" />
    <text x="17" y="12" textAnchor="middle" fontFamily="Inter, sans-serif" fontSize="5.500" fill="#fff" transform="rotate(-8 17 11)">JUL</text>
    <text x="18" y="27" textAnchor="middle" fontFamily="Inter, sans-serif" fontSize="15" fill="#222" transform="rotate(-8 18 20)">1</text>
  </>,
  <>
    <path d="M6 8l21-4 3.500 24.500L10 32z" fill="#fbfaf6" stroke="#d9d5c5" strokeWidth=".6" />
    <path d="M6 8l21-4 .8 5-21 3.500z" fill="#f8c52c" />
  </>,
  <>
    <path d="M4 8l23-3.500 2.500 23L8 31z" fill="#f2f0e8" />
    <path d="M6 10l14-2 1 3-14 2z" fill="#63b254" />
    <path d="M9 17q5-2 9 0v5l-4 3-4-3z" fill="#4d8ee0" />
    <path d="M8 28l16-12M12 30l10-8" stroke="#f5d65e" strokeWidth="2.500" />
    <circle cx="26" cy="24" r="6" fill="#f8f8f8" stroke="#b9b9b9" />
    <circle cx="26" cy="24" r="3" stroke="#555" strokeWidth="1.200" />
  </>,
  <>
    <circle cx="18" cy="18" r="14" fill="#fafafa" />
    {PETALS.map((c, i) => (
      <ellipse key={i} cx="18" cy="11" rx="3.900" ry="5.800" fill={c} opacity=".9" transform={`rotate(${i * 45} 18 18)`} />
    ))}
  </>,
  <>
    <path d="M18 5q14 0 14 11T18 26q-3 0-5-.5L7 29l1.500-5.500Q4 20 4 15.500 4.500 5 18 5z" fill="#2d9ff3" />
    <path d="M5 13Q7 5 18 5t13 8z" fill="#5ac1fa" opacity=".7" />
    <ellipse cx="23" cy="23.500" rx="8.500" ry="7" fill="#fff" />
    <path d="M26 28l4 4-1-5z" fill="#fff" />
    <path d="M18 22.500h2M22 22.500h2M26 22.500h2" stroke="#246aa8" strokeWidth="2.200" />
  </>,
  <>
    <circle cx="18" cy="18" r="13" fill="#fcfcfc" stroke="#e95a9d" strokeWidth="1.600" />
    <path d="M5.500 22A13 13 0 0 1 8 10" stroke="#49b9f2" strokeWidth="1.800" />
    <path d="M14 24V12l9-2v12" stroke="#b14be0" strokeWidth="2" />
    <path d="M14 12l9-2v3l-9 2z" fill="#ef4c78" />
    <ellipse cx="12" cy="24.500" rx="3" ry="2.500" fill="#6b71ee" />
    <ellipse cx="21" cy="22.500" rx="3" ry="2.500" fill="#c24de0" />
  </>,
  <>
    <rect x="4.500" y="6" width="25" height="22" rx="4" fill="#35d04f" />
    <path d="M9 12h11v10H9zM21 15l5-3v10l-5-3z" fill="#fff" />
    <circle cx="26" cy="24" r="6.500" fill="#f8f8f8" />
    <path d="M23 21q0 6 6 6" stroke="#2fbf4a" strokeWidth="2.500" />
  </>,
  <>
    <path d="M4 8l22-4 3 24L8 32z" fill="#f7f7f7" />
    <path d="M4 8l22-4 .5 4L5 12z" fill="#f58a32" />
    <path d="M8 14l9-1.500 1 6.500-9 1.500z" fill="#3d97e0" />
    <path d="M9 14.500l6-.5-2.500 5z" fill="#f26a2a" />
    <path d="M20 13l5-.7M9 24l11-1.500M9.500 27l9-1.500" stroke="#bbb" strokeWidth="1.200" />
    <path d="M27.500 4L22 25" stroke="#ee9236" strokeWidth="3" />
    <path d="M22.500 23L20 31" stroke="#333" strokeWidth="3" />
  </>,
  <>
    <circle cx="18" cy="18" r="13.300" fill="#1c86f0" stroke="#e9eef3" strokeWidth="1.300" />
    <path d="M19.500 9L12 24M16.500 9L25 24M9 20h18" stroke="#fff" strokeWidth="2.300" strokeLinecap="round" />
  </>,
  <>
    <rect x="4" y="5" width="28" height="26" fill="#9aa2aa" />
    <circle cx="18" cy="18" r="12" fill="#26282a" />
    <circle cx="18" cy="18" r="9.500" stroke="#a9adb1" strokeWidth="2" strokeDasharray="1.500 1" />
    <circle cx="18" cy="18" r="7" stroke="#a9adb1" strokeWidth="1.500" />
    <path d="M18 18h8M18 18l-4-7M18 18l-4 7" stroke="#a9adb1" strokeWidth="1.500" />
  </>,
  <Letter c="W" color="#2489cf" dark="#0f5f9a" />,
  <Letter c="P" color="#e2402a" dark="#9e2415" />,
  <Letter c="X" color="#3ba03c" dark="#216d26" />,
  <Letter c="O" color="#f3b51e" dark="#b97a0c" />,
  <>
    <path d="M5 25q13-8 26 0-2 7-13 7T5 25z" fill="#dfe3e6" />
    <path d="M6 25l5-2M25 23l5 3" stroke="#e8803a" strokeWidth="2" />
    <circle cx="18" cy="14.500" r="11" fill="#2b56a8" />
    <ellipse cx="17" cy="9.500" rx="7" ry="4" fill="#8fb8ea" opacity=".7" />
    <path d="M14.500 17h8v7h4L18.500 32l-8-8h4z" fill="#8ec63f" />
  </>,
];

const folder = (
  <>
    <path d="M3 8q0-1.500 1.500-1.500h8L15 9h16.500Q33 9 33 10.500V28q0 1.500-1.500 1.500h-27Q3 29.500 3 28z" fill="#69c3ea" />
    <path d="M3 11.500h30V28q0 1.500-1.500 1.500h-27Q3 29.500 3 28z" fill="#86d5f5" />
  </>
);

function DockItem({ dot, children }: { dot?: boolean; children: ReactNode }) {
  return (
    <div className="flex w-[36px] shrink-0 flex-col items-center pt-[2px]">
      <svg width="36" height="36" viewBox="0 0 36 36" fill="none">
        {children}
      </svg>
      {dot && <div className="mt-[2px] size-[6px] rounded-full bg-[#2a1505]" />}
    </div>
  );
}

function Dock() {
  return (
    <div className="flex h-[50px] w-full shrink-0 justify-center bg-linear-to-b from-[#665a12] to-[#897a17]">
      <div className="flex h-full w-[884px] rounded-t-[10px] bg-[#ab952f] pl-[2px] shadow-[0_0_8px_#4a3f0a]">
        {DOCK.map((d, i) => (
          <DockItem key={i} dot={i === 0 || i === 2}>{d}</DockItem>
        ))}
        <div className="ml-[8px] mr-[6px] mt-[8px] h-[34px] w-[2px] shrink-0 bg-[#7d6a10]" />
        <DockItem>
          {folder}
          <circle cx="18" cy="19.500" r="5.800" stroke="#5bb3dc" strokeWidth="1.600" />
          <path d="M18 16v6M15 19.500l3 3 3-3" stroke="#5bb3dc" strokeWidth="1.800" />
        </DockItem>
        <DockItem>
          {folder}
          <path d="M12.500 14.800q2.500-1 4.500 0l-1 4.400q-2.500-1-4.500 0zM18.500 15.200q3 1 5.500 0l-1 4.600q-3 1-5.500 0zM11.200 20.600q2.500-1 4.500 0l-1 4.400q-2.500-1-4.500 0zM17.200 21q3 1 5.500 0l-1 4.600q-3 1-5.500 0z" fill="#5bb3dc" />
        </DockItem>
        <DockItem>
          <path d="M6.500 6.500h23L26 31q-.5 1-2 1H12q-1.500 0-2-1z" fill="#e4e4e4" />
          <path d="M13 8l1 23M22.500 8l-1 23" stroke="#f8f8f8" strokeWidth="2.500" />
          <ellipse cx="18" cy="7" rx="11.500" ry="2" fill="#c9c5ba" stroke="#f5f5f5" strokeWidth="1" />
        </DockItem>
      </div>
    </div>
  );
}

export default function App() {
  return (
    <div className="flex h-[1600px] w-[2560px] flex-col overflow-hidden bg-[#76681a]">
      <MenuBar />
      <div className="flex w-full shrink-0 flex-col overflow-hidden rounded-[10px]">
        <TabStrip />
        <div className="flex w-full shrink-0 flex-col bg-linear-to-b from-[#ececec] to-[#d2d2d2]">
          <Toolbar />
          <BookmarksBar />
        </div>
        <AppBar />
        <Canvas />
      </div>
      <Dock />
    </div>
  );
}
